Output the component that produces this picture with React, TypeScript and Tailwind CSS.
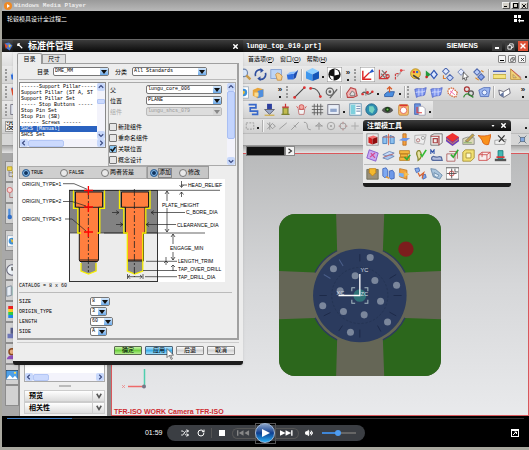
import React from 'react';
import { Shuffle, RotateCw, Volume2, X } from 'lucide-react';

const ICONS: Record<string, React.ReactNode> = {
  search: <><circle cx="6" cy="6" r="4.500" fill="#dbe9fb" stroke="#7288b0" strokeWidth="1.500" /><path d="M9 9l5 5" stroke="#c79a4a" strokeWidth="3" /></>,
  rotate: <g fill="none" stroke="#2f4f9e" strokeWidth="2"><path d="M2 10A6 6 0 0 1 10 2.500" /><path d="M14 6a6 6 0 0 1-8 7.500" /><path d="M8 0l4 3-4 3zM8 16l-4-3 4-3z" fill="#2f4f9e" stroke="none" /></g>,
  pan: <><rect x="1" y="2" width="13" height="11" fill="#bcd4f5" stroke="#7c9ad0" /><path d="M7 8l2-2 3 1 3 3-1 5H9z" fill="#f6cf8f" stroke="#c58d3e" /></>,
  plane: <><path d="M1 8l9-1-1 7H2z" fill="#2f6ede" /><path d="M1 8l4-3 9-1-4 3z" fill="#8cc0ff" /><path d="M10 7l5-5-3 10-3 2z" fill="#1c49ac" /></>,
  cube: <><path d="M0 4l8-4 8 4-8 4z" fill="#8fd0ff" /><path d="M0 4l8 4v8l-8-3z" fill="#3e97ee" /><path d="M16 4L8 8v8l8-3z" fill="#1456b8" /></>,
  contrast: <><rect width="16" height="16" fill="#fff" stroke="#888" /><circle cx="8" cy="8" r="6.500" fill="#111" /><path d="M8 2a6 6 0 0 1 5 6L8 9zM3 9l4 1v4a6 6 0 0 1-4-5z" fill="#fff" /></>,
  csys: <><rect width="16" height="16" fill="#fff" stroke="#888" /><path d="M3 4v9h9M4 12l6-6" fill="none" stroke="#d22" strokeWidth="1.500" /><path d="M9 7l4-5 2 3z" fill="#2559c9" /></>,
  csysDyn: <g fill="none" strokeWidth="1.500"><path d="M3 2v11h11M3 13L12 4" stroke="#c33" /><path d="M6 3l7 7M5 7l5 5" stroke="#777" /><circle cx="13" cy="10" r="2" stroke="#c33" /></g>,
  csysOrigin: <g fill="none" strokeWidth="1.500"><path d="M3 14V7h6M9 3h5" stroke="#c44" strokeDasharray="3 1" /><path d="M5 11l6-8" stroke="#aaa" /><circle cx="10" cy="3" r="1.500" fill="#e44" stroke="none" /></g>,
  palette: <><circle cx="8" cy="7" r="6" fill="#f5c945" stroke="#b28218" /><circle cx="6" cy="5" r="1.500" fill="#d33" /><circle cx="10" cy="5" r="1.500" fill="#36c" /><path d="M5 9l8 5" stroke="#444" strokeWidth="2" /></>,
  playGem: <><path d="M1 3l6 5-6 5z" fill="#249a3c" /><path d="M11 3l4 5-4 5-4-5z" fill="#dbe7ff" stroke="#3156b3" strokeWidth="1.500" /><circle cx="2" cy="11" r="1.500" fill="#c22" /></>,
  gems: <g stroke="#4c66ad" strokeWidth="1.300"><path d="M6 0l4 4-4 4-4-4z" fill="#dfe9ff" /><path d="M11 8l4 4-4 4-4-4z" fill="#c5d6fc" /><path d="M3 9v4h3" fill="none" stroke="#de7b2c" /></g>,
  gemSelect: <><path d="M5 1l4 4-4 4-4-4z" fill="#e2eaff" stroke="#6679ad" /><path d="M8 5l6 6-3 .500 1 3-2 .500-1-3-2 2z" fill="#fff" stroke="#444" /></>,
  gemLink: <g stroke="#4c66ad" strokeWidth="1.300"><path d="M5 1l4 4-4 4-4-4z" fill="#b9cdfa" /><path d="M10 7l4 4-4 4-4-4z" fill="#86a4ee" /><path d="M3 12l4 3M10 3l3 2" stroke="#d98a2e" /></g>,
  measure: <><path d="M0 4h16" stroke="#2c47ad" strokeWidth="1.500" /><rect x="0" y="8" width="16" height="5" fill="#f5e37c" stroke="#b9a23a" /></>,
  triangle: <><path d="M2 1v13h13z" fill="#f3d17c" stroke="#b58a34" /><path d="M5 8v4h4z" fill="#ddd" stroke="#b58a34" /><path d="M3 2l12 10" stroke="#c44" /></>,
  assembly: <><path d="M1 5l6-3 7 2v9l-7 2-6-3z" fill="#e8a53c" /><path d="M7 6l7-2v9l-7 2z" fill="#4f8ede" /><path d="M3 8h5v5H3z" fill="#f9db90" /></>,
  line: <><path d="M2 14L14 2" stroke="#444" strokeWidth="1.300" /><circle cx="2" cy="14" r="1.700" fill="#d33" /><circle cx="14" cy="2" r="1.700" fill="#d33" /></>,
  arc: <><path d="M2 3c6-1 10 3 12 10" fill="none" stroke="#555" strokeWidth="1.300" /><circle cx="2" cy="3" r="1.700" fill="#d33" /><circle cx="14" cy="13" r="1.700" fill="#d33" /></>,
  circleTan: <g fill="none" stroke="#666" strokeWidth="1.500"><circle cx="6" cy="7" r="4.500" /><path d="M6 15L15 4" /><circle cx="6" cy="7" r="1" fill="#888" /></g>,
  profile: <><path d="M2 9l5-7 6 2 2 8-5 2H3z" fill="#f1b8b8" stroke="#b44" strokeWidth="1.300" /><path d="M6 10l3-4 3 3v3H7z" fill="#ddd" stroke="#666" /></>,
  spline: <><path d="M1 10c4-8 6 6 13-3" fill="none" stroke="#555" strokeWidth="1.500" /><path d="M6 3v9" stroke="#777" /><circle cx="2" cy="10" r="1.500" fill="#d33" /><circle cx="8" cy="8" r="1.700" fill="#d33" /><circle cx="14" cy="7" r="1.500" fill="#d33" /></>,
  extrude: <><path d="M2 10l4-3h8l-2 6H2z" fill="#4b8fe0" stroke="#27569e" /><path d="M8 1v7M5 4l3-3 3 3" stroke="#d65c2b" fill="none" strokeWidth="1.500" /></>,
  surface: <><path d="M1 4c4-2 9 1 14-2l-2 9c-4 2-6 0-10 3z" fill="#7f97f0" stroke="#4f63c8" /><path d="M6 3v9M10 3v9M2 8c4-2 8 1 12-2" stroke="#dce3ff" fill="none" /></>,
  patch: <><path d="M3 4l5-2 6 6-2 6-6-2-4-4z" fill="#fff" stroke="#d66b3a" strokeWidth="1.500" strokeDasharray="2 1" /><path d="M5 6l6 5M9 4l-4 6" stroke="#e59" /></>,
  swirl: <g fill="none" strokeWidth="1.500"><circle cx="6" cy="4" r="3" stroke="#a33" /><circle cx="11" cy="9" r="3" stroke="#555" /><path d="M2 14c1-4 4-5 6-4l6 4" stroke="#383" /></g>,
  sheet: <><path d="M1 5l6-3h8l-2 11H3z" fill="#9db7ef" stroke="#4a69b7" /><circle cx="8" cy="8" r="3" fill="#e7effe" stroke="#4a69b7" /></>,
  book: <><path d="M1 5l6 2 7-4 1 6-8 5-5-3z" fill="#fff" stroke="#556" /><path d="M7 7v7l-5-3z" fill="#6677a0" /></>,
  path: <path d="M2 2h9v4H4v4h9v4H6" fill="none" stroke="#3767c9" strokeWidth="2" />,
  stamp: <><path d="M5 1h6v7H5z" fill="#2d3f9e" /><path d="M2 8l6 6 6-6z" fill="#9aa8c8" stroke="#556" /><path d="M2 15h12" stroke="#c90" /></>,
  pillar: <><path d="M5 6h6v8H5zM3 14h10" fill="#c2bb4e" stroke="#7c8130" strokeWidth="1.500" /><path d="M4 5h8M8 1v4" stroke="#c33" strokeWidth="1.500" /></>,
  flower: <><path d="M4 8h8l-1 6H5z" fill="#f3f3f3" stroke="#b66" /><circle cx="8" cy="5" r="3" fill="#f3a7a0" stroke="#c44" /><path d="M2 4l2 3M14 4l-2 3" stroke="#c44" /></>,
  grid: <path d="M1 4h14M1 8h14M1 12h14M4 1v14M8 1v14M12 1v14" stroke="#555" />,
  panel: <><rect x="1" y="2" width="14" height="12" fill="#e9eef7" stroke="#667" /><rect x="4" y="7" width="8" height="4" fill="#8fa4cb" /></>,
  list: <><rect x="1" y="1" width="14" height="14" fill="#fff" stroke="#58a" /><path d="M2 2h6v12H2z" fill="#7fd0dd" /><path d="M9 4h5M9 7h5M9 10h5" stroke="#469" /></>,
  globe: <><circle cx="8" cy="8" r="7" fill="#2f8fb0" stroke="#1c5f86" /><path d="M5 4h5l2 4-3 5-4-3z" fill="#74d0be" /></>,
  eye: <><path d="M1 9c3-6 11-6 14 0-3 5-11 5-14 0z" fill="#555" /><circle cx="8" cy="8" r="3" fill="#173f17" /><circle cx="8" cy="8" r="1.300" fill="#72c255" /></>,
  pot: <><rect x="2" y="2" width="12" height="13" rx="2" fill="#f7c16e" stroke="#c3873c" /><circle cx="8" cy="9" r="4" fill="#fff" stroke="#d55" /><path d="M3 3h10" stroke="#d33" strokeWidth="2" /></>,
  copy: <><path d="M2 1h7v13H2z" fill="#6d94e0" stroke="#3c5fae" /><path d="M7 4h5l3 3v8H7z" fill="#fff" stroke="#99a" /><path d="M5 5v7h6" stroke="#d44" fill="none" strokeWidth="1.500" /></>,
  snapRect: <rect x="2" y="3" width="12" height="10" fill="none" stroke="#999" strokeWidth="1.500" strokeDasharray="3 2" />,
  snapMulti: <path d="M2 3l9 10M2 13l9-10M6 2v12M11 5l4 3-4 4" fill="none" stroke="#999" strokeWidth="1.500" />,
  snapLine: <path d="M2 13L14 3" stroke="#999" strokeWidth="1.500" />,
  snapMid: <path d="M2 14L14 2M6 7l4 3" stroke="#999" strokeWidth="1.500" />,
  snapCurve: <path d="M3 2c10 0 1 12 11 12" stroke="#999" fill="none" strokeWidth="1.500" />,
  snapEnd: <path d="M8 2v12M2 8h12M3 8l5-4 5 4" stroke="#999" fill="none" strokeWidth="1.500" />,
  snapCenter: <><circle cx="8" cy="8" r="6" fill="none" stroke="#999" strokeWidth="1.300" /><circle cx="8" cy="8" r="1.500" fill="#999" /></>,
  snapQuad: <><circle cx="8" cy="8" r="5" fill="none" stroke="#999" strokeWidth="1.500" /><path d="M8 1v4M8 11v4M1 8h4M11 8h4" stroke="#b99" strokeWidth="2" /></>,
  snapPlus: <path d="M8 2v12M2 8h12" stroke="#aaa" strokeWidth="1.500" />,
  fit: <><rect x="4" y="4" width="8" height="8" fill="#84a9df" stroke="#456" /><path d="M1 1l3 3M15 1l-3 3M1 15l3-3M15 15l-3-3" stroke="#678" strokeWidth="1.500" /></>,
  redCube: <><rect x="1" y="1" width="14" height="14" fill="none" stroke="#888" /><path d="M3 5l6-2 5 2-6 2z" fill="#f76f6f" /><path d="M3 5l5 2v7l-5-2z" fill="#d11e1e" /><path d="M14 5L8 7v7l6-2z" fill="#8f0c0c" /></>,
  splitBlue: <><path d="M1 5l5-2v10H1zM10 3l5 2v8h-5z" fill="#8cc0ee" stroke="#3f78b8" /><path d="M1 5h14M8 1v14" stroke="#d05a42" /></>,
  cutOrange: <><path d="M6 1h4v14H6z" fill="#f3a040" stroke="#b96a1d" /><path d="M1 9l5-3h9l-5 4z" fill="#7199e8" /></>,
  regionCheck: <><path d="M1 3l14-1-3 12-11-2z" fill="#eee" stroke="#aaa" /><circle cx="5" cy="9" r="2" fill="none" stroke="#a66" /><circle cx="11" cy="6" r="2" fill="none" stroke="#999" /></>,
  cavityBox: <><path d="M1 3l4-2h10v11l-4 3H1z" fill="#eee" stroke="#666" /><path d="M1 4h10v11M4 7h5v5H4z" fill="none" stroke="#a44" strokeWidth="1.500" /></>,
  layers: <><path d="M0 5v5l8 6 8-6V5z" fill="#6d3fb8" /><path d="M0 5l8 6 8-6-8-5z" fill="#ef3130" /><path d="M0 7l8 6 8-6" stroke="#f59b35" fill="none" /></>,
  edit: <><path d="M1 7l6-2 8 1v8H1z" fill="#dcd9b8" stroke="#888" /><path d="M4 10l9-9 2 2-8 8z" fill="#c8a64a" stroke="#776" /><path d="M2 12h10" stroke="#7a5" /></>,
  orangeSheet: <path d="M0 3c5 1 10 1 16-1l-3 12c-3 1-5 0-7-2-1-4-2-5-6-9z" fill="#f9921c" stroke="#d4580c" />,
  trim: <><path d="M1 9l14-1-2 6H1z" fill="#f2f2f2" stroke="#999" /><path d="M5 3l8 8M13 3L6 11" stroke="#333" strokeWidth="1.500" /></>,
  purpleSheet: <><path d="M4 1l11 4-3 10L1 11z" fill="#c9a8f0" stroke="#7a4cc8" /><path d="M6 5l5 6M11 5l-6 5" stroke="#d3478f" strokeWidth="1.500" /></>,
  plates: <><path d="M1 7l8-4 6 2-8 4z" fill="#c6dcfa" stroke="#6380b0" /><path d="M1 11l8-4 6 2-8 4z" fill="#a8c6f0" stroke="#6380b0" /><path d="M2 10l12-4" stroke="#c66" /></>,
  moldBase: <><path d="M2 2h12v4H2zM3 6h9v4H3zM2 10h12v4H2z" fill="#f4b73e" stroke="#b97c20" /><path d="M8 10l3 3 4-6" stroke="#3a3" strokeWidth="2" fill="none" /></>,
  clip: <><path d="M5 2c-5 4 1 6 0 12 5-3 5-8 2-12z" fill="#e7e3a3" stroke="#8b8b35" strokeWidth="1.500" /><path d="M8 6l2 3 5-8" stroke="#3b3" strokeWidth="2" fill="none" /></>,
  sprue: <><path d="M1 6V1l2 3 2-3v5" stroke="#35a" fill="none" strokeWidth="1.300" /><path d="M4 9c6 3 5-1 10 1l1 4H5c-4 0-4-4-1-5z" fill="#b4bfdf" stroke="#556a9e" strokeWidth="1.500" /></>,
  boxCheck: <><path d="M1 6h10v9H1zM4 3h10v9" fill="#eee" stroke="#a55" /><path d="M6 7l3 3 6-9" stroke="#3a3" strokeWidth="2" fill="none" /></>,
  yellowBox: <><path d="M1 4l3-3h11v10l-4 4H1z" fill="#f1df72" stroke="#a08a32" /><path d="M5 5h6v6H5z" fill="#fffbd2" stroke="#a08a32" /></>,
  redBox: <path d="M1 7l4-3h10v7l-4 3H1zM1 7h10v7M11 7l4-3M5 4v6" fill="#f7eeee" stroke="#c44" />,
  insert: <><path d="M1 12h14v3H1z" fill="#555" /><path d="M5 2h6v10H5z" fill="#43b8b3" stroke="#177" /><path d="M3 10h10" stroke="#d33" strokeWidth="2" /></>,
  pocket: <><path d="M1 3h3v5h8V3h3v12H1z" fill="#9a907a" stroke="#665" /><path d="M4 2h8v5l-4 4-4-4z" fill="#f5b92e" stroke="#c78613" /></>,
  twoBars: <><path d="M1 2l4-1 2 3v8l-4 1-2-2z" fill="#7fa9f0" stroke="#3b61b8" /><path d="M9 5l4-1 2 3v7l-4 1-2-2z" fill="#6c98e8" stroke="#3b61b8" /><path d="M5 12l4 2" stroke="#e39a38" strokeWidth="2" /></>,
  orangeBlock: <><path d="M2 2l9 2v11l-9-3z" fill="#f3a53d" stroke="#c27820" /><path d="M1 7l6 1v5l-6-2z" fill="#7ab0f2" /><path d="M8 6l6 3-6 3z" fill="#f7c050" /></>,
  chain: <><path d="M1 2l5-1 1 4-4 2z" fill="#8ab0f0" stroke="#4466b0" /><path d="M10 10l4-1 1 4-4 2z" fill="#7aa3ea" stroke="#4466b0" /><path d="M5 7l2 4 5-4-2 7" stroke="#d9622e" fill="none" strokeWidth="1.500" /></>,
  slide: <><path d="M1 2l6 1 8 7-3 5-8-3z" fill="#a9c4dc" stroke="#6484a5" /><path d="M5 7l6 3-2 3-4-2z" fill="#dceaf5" stroke="#6484a5" /></>,
  target: <><rect x="0" y="1" width="16" height="14" fill="#fff" stroke="#444" /><circle cx="7" cy="8" r="3" fill="none" stroke="#c33" /><path d="M7 2v12M1 8h12M11 2v4h4" stroke="#444" fill="none" /></>,
  clock: <><circle cx="8" cy="8" r="7" fill="#eef3f8" stroke="#667" strokeWidth="1.500" /><path d="M8 4v4h4" stroke="#333" fill="none" strokeWidth="1.500" /></>,
  spectrum: <><path d="M3 0h10v4H3z" fill="#e22" /><path d="M3 4h10v4H3z" fill="#fc2" /><path d="M3 8h10v4H3z" fill="#3c4" /><path d="M3 12h10v4H3z" fill="#28e" /></>,
  tree: <><path d="M2 1h6v5H2z" fill="#f2d84c" stroke="#b49b22" /><path d="M4 6v8h5M4 9h5" stroke="#778" fill="none" /><path d="M9 7h5v3H9zM9 12h5v3H9z" fill="#e9c842" stroke="#b49b22" /></>,
  constraint: <><circle cx="5" cy="4" r="3.500" fill="#f7d4d4" stroke="#c55" /><path d="M5 8v6h8M10 7v8" stroke="#a66" fill="none" /></>,
  thermo: <><path d="M3 1h3v10H3zM10 5h3v8h-3z" fill="#4f8edc" /><circle cx="5" cy="12" r="3" fill="#2f6fca" /></>,
  web: <><rect x="2" y="1" width="12" height="14" fill="#fff" stroke="#9ab" /><circle cx="8" cy="8" r="4.500" fill="#3c91dc" /><path d="M6 5l4 2-2 4z" fill="#f5c534" /></>,
  chart: <><path d="M1 3l6-2v13l-6 1z" fill="#e6ecf4" stroke="#678" /><path d="M9 2h2v12H9z" fill="#3a9" /><path d="M12 5h2v9h-2z" fill="#d44" /></>,
  tool: <><path d="M2 9h8v6H2z" fill="#6e77b8" /><path d="M6 1h4v8H6z" fill="#555c8a" /><path d="M10 6l4 3" stroke="#c9a13b" strokeWidth="2" /></>,
  person: <><circle cx="8" cy="5" r="4" fill="#e9b183" stroke="#8c4b20" strokeWidth="2" /><path d="M1 15c1-7 13-7 14 0z" fill="#8d4fb8" /><path d="M10 10h5v5h-5z" fill="#d9b43b" /></>,
  picture: <><rect x="0" y="2" width="16" height="12" fill="#4ea0e8" stroke="#246" /><path d="M0 14l5-6 4 4 3-3 4 5z" fill="#fff" /><circle cx="12" cy="5" r="1.500" fill="#fd5" /></>,
  logo: <><path d="M2 2l7-1 6 5-5 9-6-4z" fill="#4a78d2" /><path d="M1 2l6 5-4 5z" fill="#e34c2c" /><path d="M8 4l5 2-4 4z" fill="#f3c631" /></>,
};

const Icon = ({ name, className = 'size-[13px]' }: { name: string; className?: string }) => (
  <svg viewBox="0 0 16 16" className={`shrink-0 ${className}`} aria-hidden="true">{ICONS[name]}</svg>
);

const Grip = () => <span className="mr-[3px] h-3 w-[2px] shrink-0 border-l-2 border-dotted border-[#999]" />;

const More = () => (
  <button aria-label="more" className="flex w-3 shrink-0 flex-col items-center">
    <span className="text-[8px] leading-[8px] font-bold text-[#222]">»</span>
    <span className="mt-[2px] size-[2px] bg-[#222]" />
  </button>
);

// '|' separator, ':' grip, '.' drop-down dot, '>>' overflow
const ToolItems = ({ items }: { items: string[] }) => (
  <>
    {items.map((item, i) => {
      if (item === '|') return <span key={i} className="mx-px h-3 w-[2px] shrink-0 border-l border-[#b0b0b0] bg-white/70" />;
      if (item === ':') return <Grip key={i} />;
      if (item === '.') return <span key={i} className="flex w-[6px] shrink-0 justify-center"><span className="mt-1 size-[2px] bg-[#222]" /></span>;
      if (item === '>>') return <More key={i} />;
      return (
        <button key={i} aria-label={item} className="flex h-4 w-4 shrink-0 items-center justify-center">
          <Icon name={item} className={item === 'contrast' || item === 'csys' ? 'size-[15px]' : 'size-[13px]'} />
        </button>
      );
    })}
  </>
);

const Dropdown = ({ label, value, className = '', disabled = false }: { label: string; value: string; className?: string; disabled?: boolean }) => (
  <span className={`flex h-[9px] items-stretch rounded-[2px] border ${disabled ? 'border-[#bbb] bg-[#ddd] text-[#999]' : 'border-[#777] bg-white text-black'} ${className}`}>
    <select aria-label={label} disabled={disabled} className="min-w-0 flex-1 appearance-none pl-px font-['Liberation_Mono',monospace] text-[5px] leading-[7px] outline-none">
      <option>{value}</option>
    </select>
    <span className={`pointer-events-none flex w-2 shrink-0 items-center justify-center ${disabled ? 'bg-[#d5d5d5]' : 'bg-linear-to-b from-[#d5e9fd] to-[#6ba9e8]'}`}>
      <svg viewBox="0 0 6 4" className="h-1 w-[6px]"><path d="M0 0h6L3 4z" fill={disabled ? '#888' : '#111'} /></svg>
    </span>
  </span>
);

const Arrow = ({ dir }: { dir: 'up' | 'down' | 'left' | 'right' }) => {
  const d = { up: 'M1 5l3-3 3 3', down: 'M1 3l3 3 3-3', left: 'M5 1L2 4l3 3', right: 'M3 1l3 3-3 3' }[dir];
  return (
    <button aria-label={dir} className="flex size-2 shrink-0 items-center justify-center rounded-[2px] bg-[#c8d8fb]">
      <svg viewBox="0 0 8 8" className="size-[6px]"><path d={d} fill="none" stroke="#3a4a80" strokeWidth="1.500" /></svg>
    </button>
  );
};

const HScroll = ({ thumb }: { thumb: string }) => (
  <div className="flex h-2 items-center bg-[#f3f3fb]">
    <Arrow dir="left" />
    <span className={`h-[7px] rounded-[2px] border border-[#b3c6f5] bg-[#cbd9fd] ${thumb}`} />
    <span className="flex-1" />
    <Arrow dir="right" />
  </div>
);

const Radio = ({ name, label, checked = false, focused = false }: { name: string; label: string; checked?: boolean; focused?: boolean }) => (
  <label className="flex items-center gap-px text-[6px]">
    <input
      type="radio"
      name={name}
      defaultChecked={checked}
      className="size-2 appearance-none rounded-full border border-[#777] bg-[#e8e8e8] checked:border-[#3b6ea5] checked:bg-[#12355f] checked:shadow-[inset_0_0_0_1px_#8ec6f5]"
    />
    <span className={`font-['Liberation_Mono','Noto_Sans_CJK_SC',monospace] leading-[8px] ${focused ? 'outline outline-[#888]' : ''} ${/^[A-Z]/.test(label) ? 'text-[5px]' : ''}`}>{label}</span>
  </label>
);

const Check = ({ label, checked = false }: { label: string; checked?: boolean }) => (
  <label className="flex h-[11px] shrink-0 items-center gap-px">
    <span className="relative flex size-2">
      <input type="checkbox" defaultChecked={checked} className="peer size-2 appearance-none rounded-[1px] border border-[#777] bg-[#e6e6e6] checked:bg-[#8cc9f5]" />
      <svg viewBox="0 0 8 8" className="pointer-events-none absolute inset-0 hidden peer-checked:block"><path d="M1.500 4l2 2 3-4" stroke="#111" strokeWidth="1.500" fill="none" /></svg>
    </span>
    {label}
  </label>
);

const CATALOG = [
  '------Support Pillar-----',
  'Support Pillar (ST A, ST',
  'Support Pillar Set',
  '----- Stop Buttons -----',
  'Stop Pin Set',
  'Stop Pin (SB)',
  '------ Screws ------',
  'SHCS [Manual]',
  'SHCS Set',
];

const SIZES = [
  { label: 'SIZE', value: '8', width: 'w-5' },
  { label: 'ORIGIN_TYPE', value: '3', width: 'w-[17px]' },
  { label: 'LENGTH', value: '60', width: 'w-[23px]' },
  { label: 'SIDE', value: 'A', width: 'w-[17px]' },
];

const ScrewDiagram = () => (
  <svg viewBox="0 0 206 103" className="h-[103px] w-[206px] bg-white font-['Liberation_Sans',sans-serif] text-[5px]">
    <rect x="50.500" y="11.500" width="88" height="91" fill="#ececec" stroke="#333" />
    <rect x="50.500" y="11.500" width="88" height="42.500" fill="#828282" stroke="#333" strokeWidth=".700" />
    <path d="M50 11.300h151M85 54h101" stroke="#222" strokeWidth=".700" />

    <path d="M62 82h15.500v10l-8 3-7.500-3zM108.500 82h15.500v10l-8 3-7.500-3z" fill="#8a8a8a" />
    <path d="M56.500 13h27v15.300h-4V81l-1 1.500H61L60.300 81V28.300h-3.800z" fill="#ff7f3f" stroke="#1a1a1a" />
    <path d="M102.500 13h27v15.300H126V54h-1.500v28h-16V54h-2V28.300h-4z" fill="#ff7f3f" stroke="#1a1a1a" />
    <path d="M57 28.300h26M103 28.300h26M61 81h18M108 81h17" stroke="#222" />
    <g fill="none" stroke="#f8f000" strokeWidth="1.300">
      <path d="M54.500 11.500v17.800h4.300V54H62M85.500 11.500v17.800h-4.700V54h-2.500M62 84v8l7.500 3 7.500-3v-8" />
      <path d="M100.500 11.500v17.800h4.300V54h3.500v38l7.500 3 8-3V54h3V29.300h4.200V11.500" />
    </g>
    <path d="M69.400 13v80M115.400 10v88" stroke="#222" strokeWidth=".800" strokeDasharray="7 2 2 2" />
    <path d="M65 11.500h9M69.400 7v9M65 28h9M69.400 24v9M65 53h9M69.400 49v9" stroke="#f00" strokeWidth="1.300" />

    <g fill="none" stroke="#222" strokeWidth=".700">
      <path d="M44 4.700h11l13 5.500M44 22.500h9l14 4.500M46 40h7l14 12" />
      <path d="M162 6h6M162.500 2v6M160.500 6l2 2.500 2-2.500M162.500 18v-5M160.500 15.500l2-2.500 2 2.500M148 12v10M146 15l2-3 2 3M148 29v24M146 50l2 3 2-3" />
      <path d="M93 33.500h7M97 31.500l3 2-3 2M132 33.500h34M135 31.500l-3 2 3 2M97 45.500h7M101 43.500l3 2-3 2M127 45.500h30M130 43.500l-3 2 3 2" />
      <path d="M154 55v10M152 58l2-3 2 3M154 73v8M152 78l2 3 2-3M127 82.300h31M147 78v8M145 84l2-2 2 2M154 92v-6M152 88l2-2 2 2M124 91.500h34" />
      <path d="M109 97.700h14M108.500 95v5M124 95v5M111 96l-2 1.700 2 2M121 96l2 1.700-2 2M126 97.700h32" />
    </g>
    <text x="3" y="6.500">ORIGIN_TYPE=1</text>
    <text x="3" y="24">ORIGIN_TYPE=2</text>
    <text x="3" y="42">ORIGIN_TYPE=3</text>
    <text x="169" y="8">HEAD_RELIEF</text>
    <text x="143" y="27.500">PLATE_HEIGHT</text>
    <text x="167" y="35">C_BORE_DIA</text>
    <text x="158" y="47.500">CLEARANCE_DIA</text>
    <text x="151" y="71">ENGAGE_MIN</text>
    <text x="159" y="84">LENGTH_TRIM</text>
    <text x="159" y="92">TAP_OVER_DRILL</text>
    <text x="159" y="99.500">TAP_DRILL_DIA</text>
  </svg>
);

const StandardPartDialog = () => (
  <section className="absolute top-0 left-[11px] z-20 w-[230px] rounded-b-[3px] border-b-4 border-[#1c1c1c] bg-[#ededed] shadow-sm">
    <header className="flex h-[13px] items-center border-t border-[#666] bg-linear-to-b from-[#3c3c3c] to-[#0b0b0b] px-1 text-white">
      <svg viewBox="0 0 8 8" className="mr-[5px] size-[6px]"><path d="M1 1l6 6M1 1h3M1 1v3" stroke="#fff" strokeWidth="1.500" /></svg>
      <h2 className="flex-1 text-[9px] leading-[10px] font-bold">标准件管理</h2>
      <button aria-label="close"><X size={7} strokeWidth={5} /></button>
    </header>

    <div className="px-1 pt-px text-[6px] leading-[8px] text-black">
      <div role="tablist" className="flex items-end">
        <button role="tab" aria-selected="true" className="z-10 -mb-px h-[11px] w-[25px] rounded-t-[2px] border border-b-0 border-[#999] bg-[#ededed]">目录</button>
        <button role="tab" aria-selected="false" className="h-[9px] w-6 border border-b-0 border-[#999] bg-[#e0e0e0]">尺寸</button>
      </div>

      <div className="border border-r-2 border-b-2 border-[#a0a0a0] px-px pb-[2px]">
        <div className="flex h-4 items-center border-b border-[#bbb] pl-[18px]">
          <span className="mr-1">目录</span>
          <Dropdown label="目录" value="DME_MM" className="w-14" />
          <span className="mr-[5px] ml-[6px]">分类</span>
          <Dropdown label="分类" value="All Standards" className="w-[75px]" />
        </div>

        <div className="mt-[2px] flex h-[84px] items-start gap-[2px]">
          <div className="w-[87px] shrink-0 border border-[#888] bg-white">
            <div className="flex">
              <ul className="min-w-0 flex-1 overflow-hidden py-px font-['Liberation_Mono',monospace] text-[5px] leading-[6px] whitespace-pre">
                {CATALOG.map((name) => (
                  <li key={name} className={name === 'SHCS [Manual]' ? 'bg-[#2a62c0] pl-px text-white' : 'pl-px'}>{name}</li>
                ))}
              </ul>
              <div className="flex w-2 flex-col bg-[#f3f3fb]">
                <Arrow dir="up" />
                <span className="mt-2 h-[5px] rounded-[1px] border border-[#b3c6f5] bg-[#cbd9fd]" />
                <span className="flex-1" />
                <Arrow dir="down" />
              </div>
            </div>
            <HScroll thumb="w-9" />
          </div>

          <div className="flex h-[84px] flex-1 overflow-hidden border border-[#aaa]">
            <div className="flex flex-1 flex-col overflow-hidden pt-[2px] pr-1">
              <div className="grid shrink-0 grid-cols-[36px_1fr] items-center gap-y-[2px] pl-px">
                <span>父</span>
                <Dropdown label="父" value="lungu_core_006" className="mr-px" />
                <span>位置</span>
                <Dropdown label="位置" value="PLANE" className="mr-px" />
                <span className="text-[#aaa]">组件</span>
                <Dropdown label="组件" value="lungu_shcs_079" className="mr-px" disabled />
              </div>
              <div className="mt-[5px] flex flex-col">
                <Check label="新建组件" />
                <Check label="重命名组件" />
                <Check label="关联位置" checked />
                <Check label="概念设计" />
              </div>
            </div>
            <div className="flex w-2 flex-col bg-[#f3f3fb]">
              <Arrow dir="up" />
              <span className="h-12 rounded-[2px] border border-[#a9bff3] bg-[#c3d4fd]" />
              <span className="flex-1" />
              <Arrow dir="down" />
            </div>
          </div>
        </div>

        <div className="flex h-[13px]">
          <div className="flex w-32 items-center gap-[17px] border border-[#aaa] bg-[#cfcfcf] px-[2px]">
            <Radio name="mode" label="TRUE" checked />
            <Radio name="mode" label="FALSE" />
            <Radio name="mode" label="两者皆是" />
          </div>
          <div className="flex w-[62px] items-center gap-2 border border-[#999] bg-[#c6c6c6] px-[2px]">
            <Radio name="action" label="添加" checked focused />
            <Radio name="action" label="修改" />
          </div>
        </div>

        <ScrewDiagram />

        <div className="font-['Liberation_Mono',monospace] text-[5px]">
          <p className="mr-1 border-b border-[#bbb] pb-px leading-[9px]">CATALOG = 8 x 60</p>
          <div className="mt-1 flex flex-col gap-px">
            {SIZES.map((row) => (
              <div key={row.label} className="flex items-center">
                <span className="w-[71px]">{row.label}</span>
                <Dropdown label={row.label} value={row.value} className={row.width} />
              </div>
            ))}
          </div>
        </div>
      </div>

      <footer className="relative mt-[2px] flex justify-end gap-[3px] border-t border-[#ccc] pt-[3px] pr-1 pb-[6px]">
        <button className="h-[9px] w-7 rounded-[1px] border border-[#5a6b50] bg-linear-to-b from-[#c9f5a8] via-[#6fd040] to-[#b5ef8e] leading-[7px]">确定</button>
        <button className="h-[9px] w-7 rounded-[1px] border border-[#4b6478] bg-linear-to-b from-[#b5e6fd] via-[#3faee9] to-[#9adefa] leading-[7px]">应用</button>
        <button className="h-[9px] w-7 rounded-[1px] border border-[#888] bg-linear-to-b from-white via-[#d2d2d2] to-[#f2f2f2] leading-[7px]">后退</button>
        <button className="h-[9px] w-7 rounded-[1px] border border-[#888] bg-linear-to-b from-white via-[#d2d2d2] to-[#f2f2f2] leading-[7px]">取消</button>
        <svg viewBox="0 0 12 20" className="absolute top-[5px] right-[65px] h-3 w-2"><path d="M1 1v15l4-4 3 7 2-1-3-6h5z" fill="#fff" stroke="#333" /></svg>
      </footer>
    </div>
  </section>
);

const MoldToolbox = () => (
  <section className="absolute top-[81px] right-[18px] z-10 w-[148px] rounded-[3px] border-b-4 border-[#1c1c1c] bg-[#e9e9e9]">
    <header className="flex h-[11px] items-center rounded-t-[3px] bg-linear-to-b from-[#3c3c3c] to-[#0b0b0b] px-1 text-white">
      <h2 className="flex-1 text-[7px] leading-[10px] font-bold">注塑模工具</h2>
      <svg viewBox="0 0 6 4" className="mr-[5px] h-[2px] w-1"><path d="M0 0h6L3 4z" fill="#fff" /></svg>
      <button aria-label="close"><X size={7} strokeWidth={5} /></button>
    </header>
    <div className="flex px-px">
      <ToolItems items={['redCube', 'splitBlue', 'cutOrange', 'regionCheck', 'cavityBox', 'layers', 'edit', 'orangeSheet', 'trim']} />
    </div>
    <div className="flex px-px">
      <ToolItems items={['purpleSheet', 'plates', 'moldBase', 'clip', 'sprue', 'boxCheck', 'yellowBox', 'redBox', 'insert']} />
    </div>
    <div className="mx-px mt-px flex border-t border-[#bbb] pb-[2px]">
      <ToolItems items={['pocket', 'twoBars', 'orangeBlock', 'chain', 'slide', 'target']} />
    </div>
  </section>
);

const HOLES = [
  [330, 172], [220, 206], [285, 227], [344, 241], [409, 255], [240, 272],
  [361, 303], [188, 317], [250, 334], [312, 344], [382, 365], [271, 396],
];

const MoldModel = () => (
  <svg viewBox="57 42 485 485" className="size-[162px]">
    <rect x="57" y="42" width="485" height="485" rx="48" fill="#656656" />
    <path d="M105 42h123l3 110a145 145 0 0 0-66 65l-108-4V90a48 48 0 0 1 48-48zM372 42h122a48 48 0 0 1 48 48v123l-108 4a145 145 0 0 0-66-65zM57 357l108-4a145 145 0 0 0 66 66l-3 108H105a48 48 0 0 1-48-48zM542 357v122a48 48 0 0 1-48 48H372l-4-108a145 145 0 0 0 66-66z" fill="#2c671c" />
    <path d="M231 152a145 145 0 0 0-66 65M368 152a145 145 0 0 1 66 65M165 353a145 145 0 0 0 66 66M434 353a145 145 0 0 1-66 66" stroke="#2b3b5c" strokeWidth="4" fill="none" />
    <circle cx="299" cy="286" r="140" fill="#2b3b5e" />
    <circle cx="299" cy="286" r="84" fill="none" stroke="#223150" strokeWidth="2" strokeDasharray="7 5" />
    <path d="M299 162v22M178 286h22M191 347l20-10M236 392l11-16M299 388v24M352 376l10 18M388 336l20 11M400 286h24M388 235l20-12" stroke="#1b2744" strokeWidth="2.500" />
    <path d="M237 178l12 20M191 223l20 12" stroke="#4b5f8a" strokeWidth="3" />
    {HOLES.map(([cx, cy]) => <circle key={`${cx}-${cy}`} cx={cx} cy={cy} r="10.500" fill="#7b879c" />)}
    <circle cx="437" cy="147" r="23" fill="#7c1d1d" />
    <circle cx="299" cy="286" r="19" fill="#2f7378" />
    <path d="M275 273v-10h10M313 263h10v10M275 299v10h10M313 309h10v-10" stroke="#a9bcc4" strokeWidth="3" fill="none" />
    <path d="M299 222v64h-64" stroke="#fff" strokeWidth="4" fill="none" />
    <g fill="#d5dbe3" fontSize="17" fontFamily="Liberation Sans, sans-serif">
      <text x="301" y="216">YC</text>
      <text x="229" y="285">XC</text>
      <text x="301" y="287">ZC</text>
    </g>
  </svg>
);

const RESOURCE_TABS = ['tree', 'constraint', 'thermo', 'web', 'clock', 'chart', 'spectrum', 'tool', 'person', 'picture', ''];

const PanelRow = ({ title }: { title: string }) => (
  <button className="flex h-3 w-full items-center justify-between border border-[#ccc] bg-linear-to-b from-white to-[#dcdcdc] pl-1 text-[7px] leading-[10px] font-bold">
    {title}
    <span className="flex h-full w-3 items-center justify-center border-l border-[#ccc]">
      <svg viewBox="0 0 8 8" className="size-[6px]"><path d="M1 1l3 5 3-5" stroke="#555" strokeWidth="2" fill="none" /></svg>
    </span>
  </button>
);

const Workbench = () => (
  <main className="relative flex flex-1 flex-col bg-[#dcdcdc]">
    <header className="flex h-[13px] items-center border-t border-[#666] bg-linear-to-b from-[#4a4a4a] to-[#141414] text-white">
      <div className="flex w-[244px] shrink-0 items-center pl-[2px]"><Icon name="logo" className="size-[9px]" /></div>
      <h1 className="flex-1 font-['Liberation_Mono',monospace] text-[7px] leading-[10px] font-bold">lungu_top_010.prt]</h1>
      <span className="mr-[14px] font-['Liberation_Sans',sans-serif] text-[7px] leading-[10px] font-bold">SIEMENS</span>
      <div className="flex gap-[3px] pr-px">
        <button aria-label="minimize" className="flex size-[10px] items-end justify-center bg-[#3d3d3d] pb-[2px]"><span className="h-[2px] w-1 bg-white" /></button>
        <button aria-label="restore" className="flex size-[10px] items-center justify-center bg-[#3d3d3d]">
          <svg viewBox="0 0 8 8" className="size-[7px]"><path d="M3 3V1h4v4H5M1 3h4v4H1z" fill="none" stroke="#fff" /></svg>
        </button>
        <button aria-label="close" className="flex size-[10px] items-center justify-center bg-[#dd5035]"><X size={8} strokeWidth={4} /></button>
      </div>
    </header>

    <nav className="flex h-[14px] items-center bg-linear-to-b from-[#f0f0f0] to-[#dedede] pl-[246px] text-[6px] text-black">
      <a href="#preferences" className="mr-[6px]">首选项(<u>P</u>)</a>
      <a href="#window" className="mr-[6px]">窗口(<u>O</u>)</a>
      <a href="#help">帮助(<u>H</u>)</a>
      <div className="ml-auto flex gap-[2px] pr-[3px]">
        <button aria-label="minimize document" className="flex size-2 items-end justify-center rounded-[1px] border border-[#888] bg-[#f5f5f5] pb-px"><span className="h-px w-1 bg-black" /></button>
        <button aria-label="restore document" className="flex size-2 items-center justify-center rounded-[1px] border border-[#888] bg-[#f5f5f5]">
          <svg viewBox="0 0 8 8" className="size-[5px]"><path d="M3 3V1h4v4H5M1 3h4v4H1z" fill="none" stroke="#333" /></svg>
        </button>
        <button aria-label="close document" className="flex size-2 items-center justify-center rounded-[1px] border border-[#888] bg-[#f5f5f5] text-[#333]"><X size={5} strokeWidth={4} /></button>
      </div>
    </nav>

    <div className="flex h-[18px] items-center overflow-hidden border-b border-[#c2c2c2] bg-linear-to-b from-[#eaeaea] to-[#d5d5d5]">
      <div className="flex w-[250px] shrink-0 items-center pl-[3px]"><Grip /><Icon name="plane" /><span className="flex-1" /><Icon name="search" /></div>
      <ToolItems items={['rotate', 'pan', 'plane', '|', 'cube', '.', 'contrast', '>>', ':', 'csys', 'csysDyn', 'csysOrigin', 'palette', 'playGem', 'gems', 'gemSelect', 'gemLink', '|', 'measure', 'triangle', '.']} />
    </div>
    <div className="flex h-[17px] items-center overflow-hidden border-b border-[#c2c2c2] bg-linear-to-b from-[#eaeaea] to-[#d5d5d5]">
      <div className="flex w-[248px] shrink-0 items-center pl-[3px]"><Grip /><Icon name="logo" /><span className="flex-1" /><Icon name="web" /></div>
      <ToolItems items={['assembly']} />
      <span className="w-2 shrink-0" />
      <ToolItems items={['>>', ':', 'line', 'arc', 'circleTan', '|', 'profile', 'spline', '.', 'extrude', '.', '|', ':', 'surface', 'surface', 'patch', 'swirl', 'sheet', '|', 'book']} />
      <span className="flex-1" />
      <More />
    </div>
    <div className="flex h-[17px] items-center overflow-hidden bg-[#c9c9c9]">
      <div className="flex h-full shrink-0 items-center bg-linear-to-b from-[#eaeaea] to-[#d2d2d2]">
        <div className="flex w-[243px] shrink-0 items-center pl-[3px]"><Grip /><Icon name="panel" /></div>
        <ToolItems items={['path', 'stamp', 'pillar', 'flower', 'grid', 'panel', '.', 'list', 'globe', 'eye', 'pot', 'copy', '.']} />
      </div>
    </div>
    <div className="flex h-4 items-center overflow-hidden border-y border-[#bbb] bg-linear-to-b from-[#e3e3e3] to-[#d0d0d0]">
      <div className="flex w-[243px] shrink-0 items-center pl-[3px] text-[8px]"><span className="border border-[#999] bg-[#f3f3f3] leading-[9px]">没有</span></div>
      <Icon name="snapRect" className="size-[10px]" />
      <ToolItems items={['.', '|']} />
      <div className="flex gap-[2px] pl-px">
        {['snapMulti', 'snapLine', 'snapMid', 'snapCurve', 'snapEnd', 'snapCenter', 'snapQuad', 'snapPlus'].map((name) => (
          <button key={name} aria-label={name}><Icon name={name} className="size-[10px]" /></button>
        ))}
      </div>
      <span className="flex-1" />
      <ToolItems items={['.']} />
    </div>
    <div className="flex h-[11px] items-center justify-end bg-[#d6d6d6] pr-[2px]"><Icon name="fit" className="size-[9px]" /></div>
    <div className="z-10 flex h-2 items-start border-t border-[#999] bg-linear-to-b from-[#aaa] to-[#e4e4e4] pl-[244px]">
      <span className="h-[10px] w-[39px] shrink-0 border border-[#777] bg-[#111]" />
      <button aria-label="expand" className="flex h-[10px] w-[10px] shrink-0 items-center justify-center border border-[#888] bg-[#f3f3f3]">
        <svg viewBox="0 0 8 8" className="size-[6px]"><path d="M2 1l4 3-4 3" fill="none" stroke="#333" strokeWidth="1.500" /></svg>
      </button>
    </div>

    <div className="flex flex-1">
      <aside className="flex w-[17px] shrink-0 flex-col bg-[#a8a8a8] pt-2 pl-[3px]">
        {RESOURCE_TABS.map((name, i) => (
          <button
            key={i}
            aria-label={name || 'empty'}
            className={`flex h-[21px] shrink-0 items-center border border-[#8d8d8d] bg-[#d2d2d2] ${i === 3 ? 'mt-[6px]' : ''} ${i === 4 ? 'mt-2' : ''}`}
          >
            {name && <Icon name={name} className="size-3" />}
          </button>
        ))}
      </aside>
      <aside className="flex w-[92px] shrink-0 flex-col justify-end border-r-4 border-l border-[#8c8c8c] bg-[#efefef] pr-[2px] pb-[2px] pl-1">
        <div className="border border-t-0 border-[#aaa] bg-white">
          <div className="h-[20px]" />
          <HScroll thumb="w-4" />
        </div>
        <span className="mx-auto my-[3px] h-[2px] w-3 bg-[#bbb]" />
        <PanelRow title="预览" />
        <PanelRow title="相关性" />
      </aside>
      <section className="relative flex flex-1 items-center justify-center border border-[#d9575b] bg-linear-to-b from-[#b9babb] via-[#d6d7d9] to-[#e9eaec] pt-[21px] pl-20">
        <MoldModel />
        <svg viewBox="0 0 28 24" className="absolute bottom-[25px] left-2 h-6 w-7">
          <path d="M24.500 3v17" stroke="#4fcfae" strokeWidth="1.500" />
          <path d="M8 20.500h16" stroke="#ee6a6a" strokeWidth="1.500" />
          <circle cx="24" cy="20.500" r="2" fill="#778" />
          <path d="M2 19l3 3M5 19l-3 3" stroke="#ee8080" strokeWidth=".700" />
        </svg>
        <p className="absolute bottom-0 left-[2px] font-['Liberation_Sans',sans-serif] text-[7px] leading-[7px] font-bold text-[#cf2a30]">TFR-ISO WORK Camera TFR-ISO</p>
      </section>
    </div>

    <StandardPartDialog />
    <MoldToolbox />
  </main>
);

const PlayerControls = () => (
  <footer className="flex h-[31px] flex-col bg-black text-white">
    <div className="mx-[5px] mt-[2px] flex h-px bg-[#333]"><span className="w-1/8 bg-[#3d7cc4]" /></div>
    <div className="grid flex-1 grid-cols-[1fr_auto_1fr] items-center">
      <span className="pr-1 text-right font-['Liberation_Sans',sans-serif] text-[7px]">01:59</span>
      <div className="flex h-4 w-[198px] items-center rounded-full bg-[#3b3e43]">
        <button aria-label="shuffle" className="ml-[14px]"><Shuffle size={8} strokeWidth={3} /></button>
        <button aria-label="repeat" className="ml-2"><RotateCw size={8} strokeWidth={3} /></button>
        <span className="ml-[6px] h-[10px] w-px bg-[#555]" />
        <button aria-label="stop" className="ml-[7px] size-[6px] bg-white" />
        <button aria-label="previous" className="ml-[7px] flex h-[11px] w-[23px] items-center justify-center rounded-l-md border border-r-0 border-[#555]">
          <svg viewBox="0 0 14 6" className="h-[6px] w-[13px]"><path d="M0 0h1.500v6H0zM7 0v6L2 3zM13 0v6L8 3z" fill="#888" /></svg>
        </button>
        <button aria-label="play" className="flex size-[21px] items-center justify-center border border-[#555]">
          <span className="flex size-[20px] shrink-0 items-center justify-center rounded-full border border-[#9fb8d8] bg-linear-to-b from-[#8ba3c8] via-[#0e3f90] to-[#30b0f5]">
            <svg viewBox="0 0 8 8" className="ml-px size-2"><path d="M0 0l8 4-8 4z" fill="#fff" /></svg>
          </span>
        </button>
        <button aria-label="next" className="flex h-[11px] w-[23px] items-center justify-center rounded-r-md border border-l-0 border-[#555]">
          <svg viewBox="0 0 14 6" className="h-[6px] w-[13px]"><path d="M0 0l6 3-6 3zM6 0l6 3-6 3zM12 0h1.500v6H12z" fill="#fff" /></svg>
        </button>
        <button aria-label="mute" className="ml-[6px]"><Volume2 size={8} strokeWidth={3} fill="#fff" /></button>
        <input
          type="range"
          aria-label="volume"
          defaultValue={49}
          className="ml-[9px] h-[2px] w-[34px] appearance-none bg-linear-to-r from-[#3f86d6] from-50% to-[#666] to-50% [&::-webkit-slider-thumb]:size-[6px] [&::-webkit-slider-thumb]:appearance-none [&::-webkit-slider-thumb]:rounded-full [&::-webkit-slider-thumb]:bg-[#4f9df0]"
        />
      </div>
      <button aria-label="full screen" className="mr-[10px] justify-self-end">
        <svg viewBox="0 0 8 8" className="size-2"><path d="M0 0h8v8H0zM1 2v5h6V2z" fill="#fff" fillRule="evenodd" /><path d="M2 6l3-3M3.500 3H5.500v2" stroke="#fff" fill="none" /></svg>
      </button>
    </div>
  </footer>
);

export default function App() {
  return (
    <div className="flex min-h-screen flex-col border-b-3 border-l-2 border-[#a9a89f] bg-black font-['Liberation_Sans','Noto_Sans_CJK_SC',sans-serif]">
      <header className="flex h-[11px] items-center bg-linear-to-b from-[#9a9a9a] to-[#b8b8b8] pr-px pl-[2px]">
        <svg viewBox="0 0 8 8" className="mr-[2px] size-2"><circle cx="4" cy="4" r="4" fill="#ee8a25" /><path d="M3 2l3 2-3 2z" fill="#fff" /></svg>
        <h1 className="flex-1 font-['Liberation_Mono',monospace] text-[6px] font-bold text-[#ececec]">Windows Media Player</h1>
        <div className="flex gap-px">
          <button aria-label="minimize player" className="flex h-[7px] w-2 items-end border border-[#eee] border-r-[#555] border-b-[#555] bg-[#d4d0c8] pb-px pl-px"><span className="h-px w-[3px] bg-black" /></button>
          <button aria-label="maximize player" className="flex h-[7px] w-2 items-center justify-center border border-[#eee] border-r-[#555] border-b-[#555] bg-[#d4d0c8]"><span className="size-[5px] border border-black" /></button>
          <button aria-label="close player" className="flex h-[7px] w-2 items-center justify-center border border-[#eee] border-r-[#555] border-b-[#555] bg-[#d4d0c8]"><X size={6} strokeWidth={4} color="#000" /></button>
        </div>
      </header>
      <div className="flex h-7 items-start justify-between px-[5px] pt-1 text-white">
        <p className="text-[6px] leading-[8px]">轮毂模具设计全过程二</p>
        <button aria-label="switch to library">
          <svg viewBox="0 0 10 8" className="h-2 w-[10px]"><path d="M0 0h3v3H0zM4 0h3v3H4zM0 4h3v3H0zM4 5.500l2-2v1.500h4v1.500H6V8z" fill="#fff" /></svg>
        </button>
      </div>
      <Workbench />
      <PlayerControls />
    </div>
  );
}
